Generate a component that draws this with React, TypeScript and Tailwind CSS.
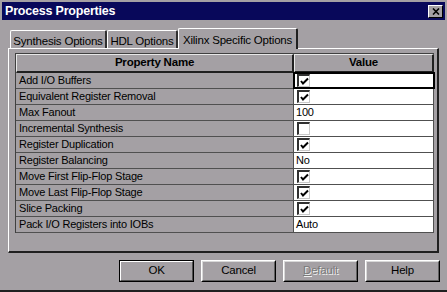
const rows: { name: string; value: "check" | "empty" | string }[] = [
  { name: "Add I/O Buffers", value: "check" },
  { name: "Equivalent Register Removal", value: "check" },
  { name: "Max Fanout", value: "100" },
  { name: "Incremental Synthesis", value: "empty" },
  { name: "Register Duplication", value: "check" },
  { name: "Register Balancing", value: "No" },
  { name: "Move First Flip-Flop Stage", value: "check" },
  { name: "Move Last Flip-Flop Stage", value: "check" },
  { name: "Slice Packing", value: "check" },
  { name: "Pack I/O Registers into IOBs", value: "Auto" },
];

const CheckBox = ({ checked }: { checked: boolean }) => (
  <div className="w-[13px] h-[13px] ml-[3px] bg-white border-t-2 border-l-2 border-t-[#303030] border-l-[#303030] border-r border-b border-r-[#c8c8c8] border-b-[#c8c8c8] flex items-center justify-center">
    {checked && (
      <svg width="9" height="9" viewBox="0 0 9 9">
        <polyline points="1,4 3,6.5 8,1.5" fill="none" stroke="#000" strokeWidth="2" />
      </svg>
    )}
  </div>
);

const Tab = ({ label, active, width }: { label: string; active?: boolean; width: string }) => (
  <div
    className={
      width +
      (active
        ? " relative z-10 h-[21px] mb-[-1px] bg-[#a4a0a4] border-t border-l border-t-white border-l-white border-r-2 border-r-[#202020] rounded-t-[2px] flex justify-center items-start pt-[3px] text-[11.5px]"
        : " h-[18px] bg-[#a4a0a4] border-t border-l border-t-white border-l-white border-r-2 border-r-[#303030] rounded-t-[2px] flex justify-center items-start pt-[2px] text-[11.5px]")
    }
  >
    {label}
  </div>
);

const Button = ({ label, isDefault, disabled }: { label: React.ReactNode; isDefault?: boolean; disabled?: boolean }) => (
  <div
    className={
      "w-[75px] h-[22px] flex items-center justify-center border " +
      (isDefault ? "border-black" : "border-t-white border-l-white border-r-black border-b-black")
    }
  >
    <div
      className={
        "w-full h-full flex items-center justify-center border text-[11.5px] " +
        (isDefault
          ? "border-t-white border-l-white border-r-[#505050] border-b-[#505050]"
          : "border-t-[#d8d8d8] border-l-[#d8d8d8] border-r-[#606060] border-b-[#606060]") +
        (disabled ? " text-[#7a7a7a] [text-shadow:1px_1px_0_#f0f0f0]" : " text-black")
      }
    >
      {label}
    </div>
  </div>
);

export default function App() {
  return (
    <div
      className="w-[447px] h-[292px] bg-[#a4a0a4] px-[2px] pt-[2px] border-b-2 border-b-[#202020] flex flex-col text-[11px] tracking-[-0.2px] text-black"
      style={{ fontFamily: '"Liberation Sans", Arial, sans-serif' }}
    >
      <div className="h-[18px] bg-[#08085a] flex items-center justify-between pl-[3px] pr-[2px]">
        <span className="text-white font-bold text-[12.5px] tracking-[-0.2px]">Process Properties</span>
        <div className="w-[15px] h-[13px] bg-[#a4a0a4] border border-t-white border-l-white border-r-black border-b-black flex items-center justify-center">
          <svg width="8" height="7" viewBox="0 0 8 7">
            <path d="M1 0.5 L7 6.5 M7 0.5 L1 6.5" stroke="#000" strokeWidth="1.6" />
          </svg>
        </div>
      </div>

      <div className="mt-[8px] h-[20px] pl-[8px] flex items-end">
        <Tab label="Synthesis Options" width="w-[97px]" />
        <Tab label="HDL Options" width="w-[71px]" />
        <Tab label="Xilinx Specific Options" width="w-[120px]" active />
      </div>

      <div className="ml-[6px] w-[431px] h-[205px] border-t border-l border-t-white border-l-white border-r-2 border-b-2 border-r-[#202020] border-b-[#202020] pl-[6px] pt-[4px]">
        <div className="w-[419px] border-l border-t border-[#404040]">
          <div className="flex h-[19px] font-bold text-[11.5px]">
            <div className="w-[278px] flex items-center justify-center border-t border-l border-t-[#e8e8e8] border-l-[#e8e8e8] border-r-2 border-b-2 border-r-[#202020] border-b-[#202020]">
              Property Name
            </div>
            <div className="flex-1 flex items-center justify-center border-t border-l border-t-[#e8e8e8] border-l-[#e8e8e8] border-r-2 border-b-2 border-r-[#202020] border-b-[#202020]">
              Value
            </div>
          </div>
          {rows.map((r, i) => (
            <div key={r.name} className="flex h-[16px] border-b border-[#505050]">
              <div className="w-[278px] pl-[3px] flex items-center border-r border-[#505050] bg-[#a4a0a4]">
                {r.name}
              </div>
              <div
                className={
                  "flex-1 bg-white flex items-center border-r border-[#505050] " +
                  (i === 0 ? "outline-2 outline-black -outline-offset-1" : "")
                }
              >
                {r.value === "check" ? (
                  <CheckBox checked />
                ) : r.value === "empty" ? (
                  <CheckBox checked={false} />
                ) : (
                  <span className="pl-[2px]">{r.value}</span>
                )}
              </div>
            </div>
          ))}
        </div>
      </div>

      <div className="mt-[7px] flex justify-end gap-[7px] pr-[5px]">
        <Button label="OK" isDefault />
        <Button label="Cancel" />
        <Button
          label={
            <span>
              <span className="underline">D</span>efault
            </span>
          }
          disabled
        />
        <Button label="Help" />
      </div>
    </div>
  );
}
